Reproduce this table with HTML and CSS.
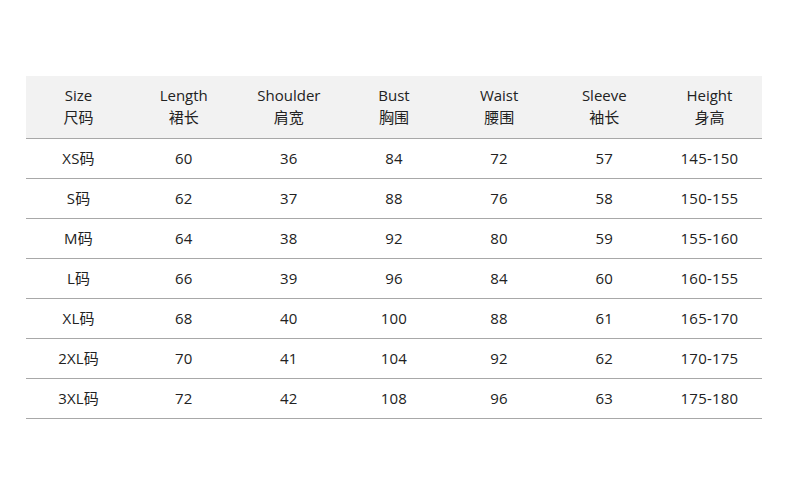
FILE: index.html
```html
<!DOCTYPE html>
<html>
<head>
<meta charset="utf-8">
<link rel="stylesheet" href="styles.css">
</head>
<body>
<div class="wrap">
<table class="sizes">
<thead>
<tr><th>Size<br>尺码</th><th>Length<br>裙长</th><th>Shoulder<br>肩宽</th><th>Bust<br>胸围</th><th>Waist<br>腰围</th><th>Sleeve<br>袖长</th><th>Height<br>身高</th></tr>
</thead>
<tbody>
<tr><td>XS码</td><td>60</td><td>36</td><td>84</td><td>72</td><td>57</td><td>145-150</td></tr>
<tr><td>S码</td><td>62</td><td>37</td><td>88</td><td>76</td><td>58</td><td>150-155</td></tr>
<tr><td>M码</td><td>64</td><td>38</td><td>92</td><td>80</td><td>59</td><td>155-160</td></tr>
<tr><td>L码</td><td>66</td><td>39</td><td>96</td><td>84</td><td>60</td><td>160-155</td></tr>
<tr><td>XL码</td><td>68</td><td>40</td><td>100</td><td>88</td><td>61</td><td>165-170</td></tr>
<tr><td>2XL码</td><td>70</td><td>41</td><td>104</td><td>92</td><td>62</td><td>170-175</td></tr>
<tr><td>3XL码</td><td>72</td><td>42</td><td>108</td><td>96</td><td>63</td><td>175-180</td></tr>
</tbody>
</table>
</div>
</body>
</html>
```
FILE: styles.css
```css
html, body { margin: 0; padding: 0; background: #fff; }
body { width: 790px; height: 498px; overflow: hidden; font-family: "Open Sans", "Noto Sans CJK SC", sans-serif; color: #222; }
.wrap { padding: 76px 0 0 26px; }
.sizes { width: 736px; border-collapse: collapse; table-layout: fixed; font-size: 15px; }
.sizes th { background: #f2f2f2; font-weight: normal; height: 60px; padding: 0 0 2px; line-height: 22px; text-align: center; border-bottom: 1px solid #a8a8a8; vertical-align: middle; }
.sizes td { height: 37px; padding: 0 0 2px; text-align: center; border-bottom: 1px solid #a8a8a8; vertical-align: middle; letter-spacing: 0.2px; }
```
